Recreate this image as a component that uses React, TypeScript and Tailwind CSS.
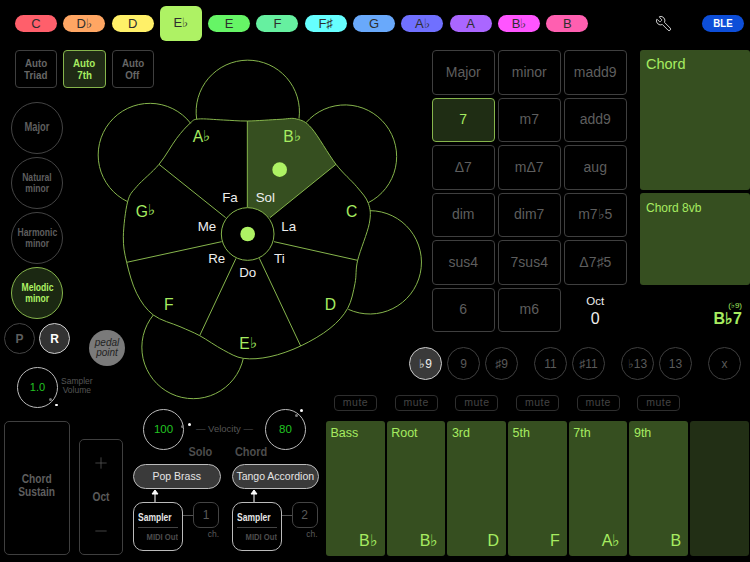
import { Wrench, Plus, Minus } from "lucide-react";

const keys = [
  { name: "C", color: "bg-[#ff5f6b]" },
  { name: "D♭", color: "bg-[#ffa663]" },
  { name: "D", color: "bg-[#fff068]" },
  { name: "E♭", color: "bg-[#aef264]", selected: true },
  { name: "E", color: "bg-[#66f566]" },
  { name: "F", color: "bg-[#66f0a0]" },
  { name: "F♯", color: "bg-[#66ffff]" },
  { name: "G", color: "bg-[#69a9fb]" },
  { name: "A♭", color: "bg-[#7070ff]" },
  { name: "A", color: "bg-[#aa66ff]" },
  { name: "B♭", color: "bg-[#ff55ff]" },
  { name: "B", color: "bg-[#ff5fb0]" },
];

const chordTypes = ["Major", "minor", "madd9", "7", "m7", "add9", "Δ7", "mΔ7", "aug", "dim", "dim7", "m7♭5", "sus4", "7sus4", "Δ7♯5", "6", "m6"];

const voices = [
  { label: "Bass", note: "B♭" },
  { label: "Root", note: "B♭" },
  { label: "3rd", note: "D" },
  { label: "5th", note: "F" },
  { label: "7th", note: "A♭" },
  { label: "9th", note: "B" },
];

// outline of the wheel, clockwise from the top spoke
const outline: [number, number][] = [
  [472, 213], [570, 208], [620, 207], [665, 235], [738, 343], [800, 410], [835, 460], [838, 520], [803, 631], [795, 700],
  [773, 775], [720, 835], [632, 888], [540, 920], [460, 925], [400, 900], [329, 857], [270, 830], [190, 795], [140, 730],
  [110, 637], [100, 560], [113, 455], [140, 410], [207, 343], [260, 265], [300, 220], [325, 207], [400, 210],
];

function spline(from: number, to: number) {
  const n = outline.length;
  let d = "";
  for (let i = from; i < to; i++) {
    const p0 = outline[(i - 1 + n) % n];
    const p1 = outline[i % n];
    const p2 = outline[(i + 1) % n];
    const p3 = outline[(i + 2) % n];
    d += ` C${p1[0] + (p2[0] - p0[0]) / 6},${p1[1] + (p2[1] - p0[1]) / 6} ${p2[0] - (p3[0] - p1[0]) / 6},${p2[1] - (p3[1] - p1[1]) / 6} ${p2[0]},${p2[1]}`;
  }
  return d;
}

const spokes = [
  [472, 472, 472, 213], [540, 503, 738, 343], [552, 575, 803, 631], [508, 625, 632, 888],
  [438, 625, 329, 857], [395, 575, 110, 637], [407, 503, 207, 343],
];

const petals = [
  "M320,208 A155,155 0 1 1 627,206",
  "M648,218 A155,155 0 1 1 835,458",
  "M840,482 A155,155 0 1 1 775,778",
  "M460,925 A154,154 0 1 1 190,795",
  "M113,455 A155,155 0 1 1 302,220",
];

const noteLabels = [
  { t: "A", flat: true, x: 308, y: 277 },
  { t: "B", flat: true, x: 580, y: 277 },
  { t: "C", x: 785, y: 500 },
  { t: "D", x: 721, y: 779 },
  { t: "E", flat: true, x: 448, y: 897 },
  { t: "F", x: 236, y: 779 },
  { t: "G", flat: true, x: 137, y: 500 },
];

const solfege = [
  { t: "Fa", x: 420, y: 455 }, { t: "Sol", x: 526, y: 455 }, { t: "Me", x: 351, y: 544 }, { t: "La", x: 596, y: 544 },
  { t: "Re", x: 380, y: 640 }, { t: "Ti", x: 568, y: 640 }, { t: "Do", x: 473, y: 682 },
];

function Flower() {
  return (
    <svg width="340" height="356" viewBox="0 0 1020 1068" className="shrink-0 mt-[3px]">
      <path d={`M472,213${spline(0, 4)} L540,503 L472,472 Z`} fill="#364f20" />
      <g fill="none" stroke="#86b54c" strokeWidth="3">
        {petals.map((d) => <path key={d} d={d} />)}
        <path d={`M472,213${spline(0, outline.length)}`} />
        {spokes.map((s) => <line key={s[0]} x1={s[0]} y1={s[1]} x2={s[2]} y2={s[3]} />)}
        <circle cx="473" cy="552" r="79" fill="#000" />
      </g>
      <circle cx="473" cy="552" r="22" fill="#aef264" />
      <circle cx="569" cy="359" r="22" fill="#aef264" />
      {noteLabels.map((l) => (
        <text key={l.t} x={l.x} y={l.y} textAnchor={l.flat ? "start" : "middle"} fill="#a6ec60" fontSize="47">
          {l.t}
          {l.flat && <tspan fontSize="44" dy="-4">♭</tspan>}
        </text>
      ))}
      {solfege.map((l) => (
        <text key={l.t} x={l.x} y={l.y} textAnchor="middle" fill="#eeeeee" fontSize="40">{l.t}</text>
      ))}
    </svg>
  );
}

function AutoButton({ top, bottom, active }: { top: string; bottom: string; active?: boolean }) {
  return (
    <div className={`w-[42.5px] h-[38px] shrink-0 rounded-[4px] border flex flex-col items-center justify-center text-[11.5px] font-bold leading-[12px] ${active ? "border-[#86b54c] bg-[#1f2a15] text-[#a6ec60]" : "border-[#3f3f3f] text-[#666666]"}`}>
      <span className="scale-x-[0.85]">{top}</span>
      <span className="scale-x-[0.85]">{bottom}</span>
    </div>
  );
}

function ScaleButton({ lines, active }: { lines: string[]; active?: boolean }) {
  return (
    <div className={`w-[52px] h-[52px] rounded-full border flex flex-col items-center justify-center font-bold ${lines.length === 1 ? "text-[12px]" : "text-[11px]"} leading-[11.5px] ${active ? "border-[#86b54c] border-[1.5px] bg-[#1b2812] text-[#aef264]" : "border-[#444444] text-[#5e5e5e]"}`}>
      {lines.map((l) => <span key={l} className="scale-x-[0.78] whitespace-nowrap">{l}</span>)}
    </div>
  );
}

function Knob({ value, size, dotClass, tickClass }: { value: string; size: string; dotClass: string; tickClass: string }) {
  return (
    <div className={`relative w-[41px] h-[41px] shrink-0 rounded-full border border-[#bbbbbb] flex items-center justify-center text-[#22c422] ${size}`}>
      {value}
      <span className={`absolute w-[3px] h-[3px] rounded-full bg-[#777777] ${tickClass}`} />
      <span className={`absolute w-[2.5px] h-[2.5px] rounded-full bg-white ${dotClass}`} />
    </div>
  );
}

function Instrument({ name, channel }: { name: string; channel: string }) {
  return (
    <div className="w-[87.5px] flex flex-col">
      <div className="h-[25px] rounded-full border border-[#bbbbbb] bg-[#3a3a3a] text-[#e5e5e5] text-[10.5px] flex items-center justify-center whitespace-nowrap">{name}</div>
      <svg width="10" height="13" viewBox="0 0 10 13" className="ml-[17px]">
        <path d="M5,13 V4 M2,5 L5,1 L8,5 Z" stroke="#ffffff" strokeWidth="1" fill="#ffffff" />
      </svg>
      <div className="flex items-start">
        <div className="w-[50px] h-[49px] rounded-[10px] border border-[#bbbbbb] flex flex-col px-[4px] pt-[9px]">
          <span className="text-[10px] font-bold text-[#e5e5e5] scale-x-[0.85] origin-left leading-[11px] whitespace-nowrap">Sampler</span>
          <div className="w-full h-px bg-[#444444] mt-[4px] mb-[4px]" />
          <span className="text-[9px] font-bold text-[#4d4d4d] scale-x-[0.85] origin-right leading-[10px] text-right whitespace-nowrap">MIDI Out</span>
        </div>
        <div className="w-[10px] h-px bg-[#555555] mt-[13px]" />
        <div className="w-[26px] flex flex-col">
          <div className="h-[26px] rounded-[7px] border border-[#444444] text-[#5a5a5a] text-[12px] flex items-center justify-center">{channel}</div>
          <span className="text-right text-[8.5px] text-[#5a5a5a] leading-[10px] mt-[1px]">ch.</span>
        </div>
      </div>
    </div>
  );
}

function Ext({ label, active, className }: { label: string; active?: boolean; className?: string }) {
  return (
    <div className={`w-[33px] h-[33px] shrink-0 rounded-full border flex items-center justify-center text-[12px] ${active ? "border-[#cccccc] bg-[#3a3a3a] text-[#eeeeee]" : "border-[#3f3f3f] text-[#5a5a5a]"} ${className ?? ""}`}>
      {label}
    </div>
  );
}

export default function App() {
  return (
    <div className="w-[750px] h-[562px] bg-black overflow-hidden font-['Liberation_Sans',sans-serif]">
      <div className="h-[47px] flex items-center pl-[15px] gap-[6.3px]">
        {keys.map((k) => (
          <div key={k.name} className={`w-[42px] flex items-center justify-center text-[#2e2e2e] text-[13px] ${k.color} ${k.selected ? "h-[35px] rounded-[6px] -mt-[1px]" : "h-[17px] rounded-full"}`}>
            {k.name}
          </div>
        ))}
        <Wrench className="ml-[60px] w-[17px] h-[17px] text-[#dddddd] -scale-x-100" strokeWidth={1.3} />
        <div className="ml-[24px] w-[42.5px] h-[17px] rounded-full bg-[#0d4ed8] text-white text-[11px] font-bold flex items-center justify-center">
          <span className="scale-x-[0.88]">BLE</span>
        </div>
      </div>

      <div className="flex h-[515px]">
        <div className="w-[326px] shrink-0">
          <div className="flex h-[359px]">
            <div className="w-[90px] shrink-0">
              <div className="flex gap-[6px] w-max pl-[14.5px] pt-[3px]">
                <AutoButton top="Auto" bottom="Triad" />
                <AutoButton top="Auto" bottom="7th" active />
                <AutoButton top="Auto" bottom="Off" />
              </div>
              <div className="flex flex-col gap-[3px] pl-[11px] mt-[14px]">
                <ScaleButton lines={["Major"]} />
                <ScaleButton lines={["Natural", "minor"]} />
                <ScaleButton lines={["Harmonic", "minor"]} />
                <ScaleButton lines={["Melodic", "minor"]} active />
              </div>
              <div className="flex gap-[4px] pl-[4px] mt-[4px]">
                <div className="w-[31px] h-[31px] rounded-full border border-[#444444] text-[#5e5e5e] text-[12px] font-bold flex items-center justify-center">P</div>
                <div className="w-[31px] h-[31px] rounded-full border border-[#cccccc] bg-[#333333] text-white text-[12px] font-bold flex items-center justify-center">R</div>
              </div>
              <div className="flex items-center pl-[17px] mt-[13px] w-max">
                <Knob value="1.0" size="text-[11px]" dotClass="left-[37px] top-[35.5px]" tickClass="left-[31px] top-[30px]" />
                <div className="ml-[3px] -mt-[3px] text-[8.5px] leading-[9px] text-[#555555] text-center">Sampler<br />Volume</div>
              </div>
            </div>
            <div className="relative">
              <Flower />
              <div className="absolute -left-px top-[283px] w-[36px] h-[36px] rounded-full bg-[#7a7a7a] text-[#222222] text-[10px] italic leading-[10px] flex flex-col items-center justify-center">
                <span>pedal</span>
                <span>point</span>
              </div>
            </div>
          </div>

          <div className="flex">
            <div className="ml-[4px] mt-[15px] w-[66px] h-[134px] rounded-[5px] border border-[#3f3f3f] flex flex-col items-center justify-center pb-[4px] text-[12px] font-bold leading-[13px] text-[#5e5e5e]">
              <span className="scale-x-[0.85]">Chord</span>
              <span className="scale-x-[0.85]">Sustain</span>
            </div>
            <div className="ml-[9px] mt-[33px] w-[44px] h-[116px] rounded-[5px] border border-[#3f3f3f] flex flex-col items-center justify-between py-[14px] text-[#5a5a5a]">
              <Plus className="w-[18px] h-[18px]" strokeWidth={1} />
              <span className="text-[12px] font-bold scale-x-[0.85]">Oct</span>
              <Minus className="w-[18px] h-[18px]" strokeWidth={1} />
            </div>
            <div className="ml-[10px] pt-[3px]">
              <div className="flex items-center ml-[10px] w-[163px]">
                <Knob value="100" size="text-[11.5px]" dotClass="left-[44px] top-[13px]" tickClass="left-[37px] top-[15px]" />
                <span className="flex-1 text-center text-[9.5px] text-[#555555] whitespace-nowrap">— Velocity —</span>
                <Knob value="80" size="text-[11.5px]" dotClass="left-[34px] -top-[1px]" tickClass="left-[29px] top-[4px]" />
              </div>
              <div className="flex pl-[54px] gap-[22px] text-[12.5px] font-bold text-[#4d4d4d] leading-[12px] -mt-[4px] h-[18px]">
                <span className="w-[24px] scale-x-[0.88]">Solo</span>
                <span className="w-[32px] scale-x-[0.88]">Chord</span>
              </div>
              <div className="flex gap-[11px]">
                <Instrument name="Pop Brass" channel="1" />
                <Instrument name="Tango Accordion" channel="2" />
              </div>
            </div>
          </div>
        </div>

        <div className="w-[424px] shrink-0 pt-[3px]">
          <div className="flex pl-[106px] h-[282px]">
            <div className="grid grid-cols-[repeat(3,62.5px)] grid-rows-[repeat(6,44.5px)] gap-x-[3.5px] gap-y-[3px]">
              {chordTypes.map((c) => (
                <div key={c} className={`rounded-[4px] border flex items-center justify-center text-[14px] ${c === "7" ? "border-[#86b54c] bg-[#1f2d14] text-[#a6ec60]" : "border-[#3f3f3f] text-[#5e5e5e]"}`}>
                  {c}
                </div>
              ))}
              <div className="flex flex-col items-center justify-center pt-[4px] text-[#eeeeee]">
                <span className="text-[11.5px] leading-[15px]">Oct</span>
                <span className="text-[16px] leading-[20px]">0</span>
              </div>
            </div>
            <div className="ml-[13.5px] w-[110px] flex flex-col">
              <div className="h-[139.5px] rounded-[3px] bg-[#364f20] text-[#a6ec60] text-[14.5px] pl-[6px] pt-[4px]">Chord</div>
              <div className="mt-[3px] h-[92.5px] rounded-[3px] bg-[#364f20] text-[#a6ec60] text-[12px] pl-[6px] pt-[6px]">Chord 8vb</div>
              <div className="mt-[17px] pr-[8px] flex flex-col items-end text-[#a6ec60]">
                <span className="text-[8px] leading-[8px]">(♭9)</span>
                <span className="text-[16px] font-bold leading-[18px]">B♭7</span>
              </div>
            </div>
          </div>

          <div className="flex pl-[83px] mt-[15px]">
            <Ext label="♭9" active />
            <Ext label="9" className="ml-[5px]" />
            <Ext label="♯9" className="ml-[5px]" />
            <Ext label="11" className="ml-[16px]" />
            <Ext label="♯11" className="ml-[5px]" />
            <Ext label="♭13" className="ml-[16px]" />
            <Ext label="13" className="ml-[5px]" />
            <Ext label="x" className="ml-[16px]" />
          </div>

          <div className="flex pl-[8px] mt-[15px] gap-[17.7px]">
            {voices.map((v) => (
              <div key={v.label} className="w-[43px] h-[15.5px] rounded-[4px] border border-[#2e2e2e] text-[#444444] text-[10.5px] tracking-[0.5px] flex items-center justify-center">mute</div>
            ))}
          </div>

          <div className="grid grid-cols-[repeat(7,58.7px)] gap-[2px] mt-[10px]">
            {voices.map((v) => (
              <div key={v.label} className="h-[135px] rounded-[3px] bg-[#364f20] text-[#a6ec60] flex flex-col justify-between pl-[4.5px] pr-[7px] pt-[3px] pb-[3px]">
                <span className="text-[12.5px]">{v.label}</span>
                <span className="text-right text-[16px]">{v.note}</span>
              </div>
            ))}
            <div className="h-[135px] rounded-[3px] bg-[#222f15]" />
          </div>
        </div>
      </div>
    </div>
  );
}
